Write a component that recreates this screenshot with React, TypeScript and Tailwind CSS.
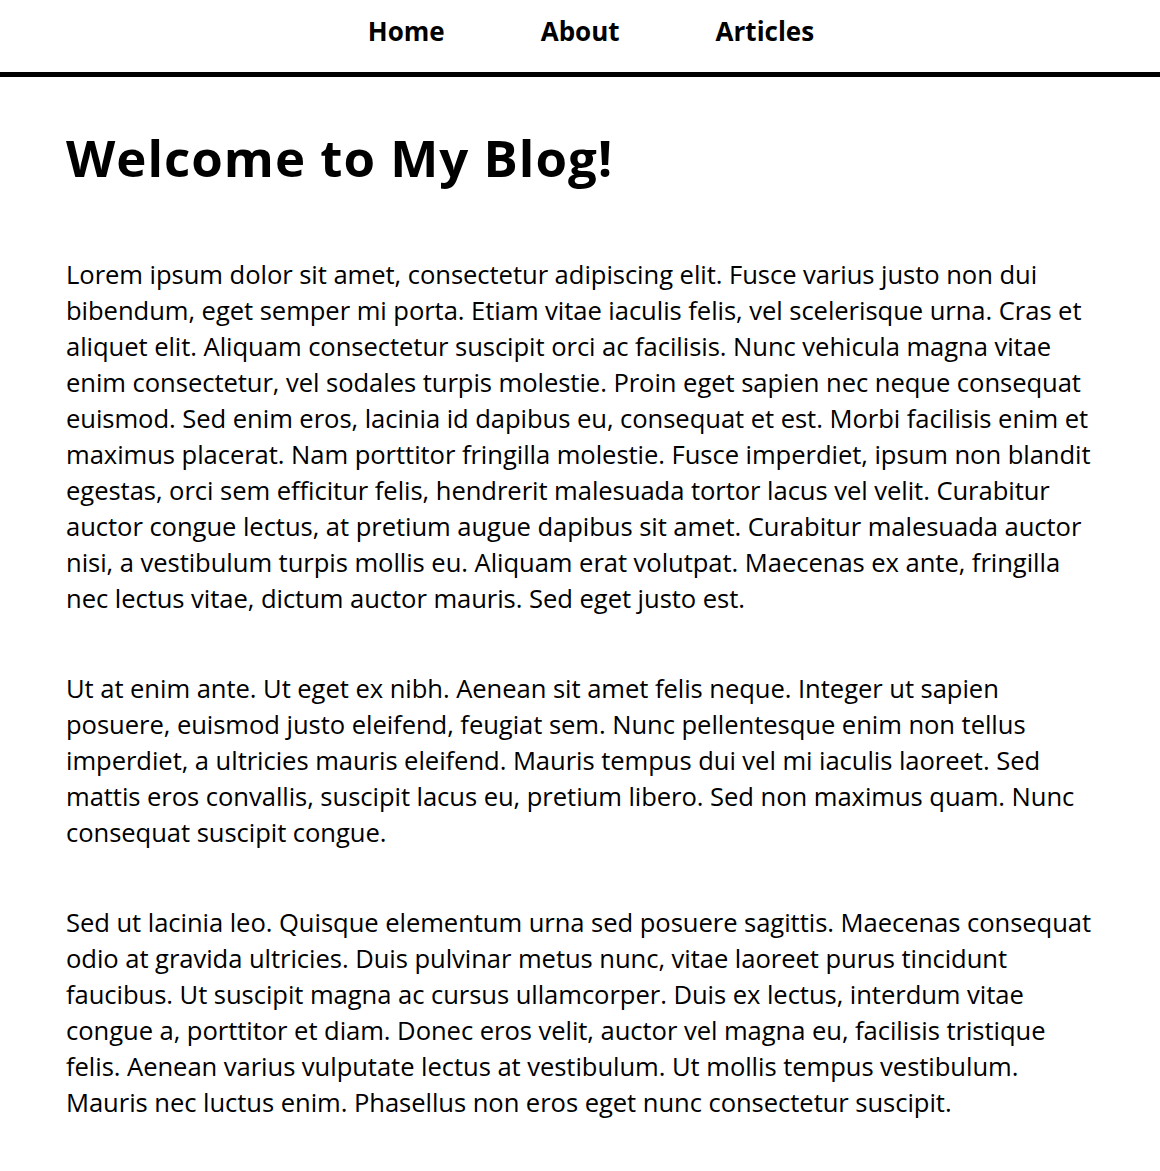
const paragraphs = [
  'Lorem ipsum dolor sit amet, consectetur adipiscing elit. Fusce varius justo non dui bibendum, eget semper mi porta. Etiam vitae iaculis felis, vel scelerisque urna. Cras et aliquet elit. Aliquam consectetur suscipit orci ac facilisis. Nunc vehicula magna vitae enim consectetur, vel sodales turpis molestie. Proin eget sapien nec neque consequat euismod. Sed enim eros, lacinia id dapibus eu, consequat et est. Morbi facilisis enim et maximus placerat. Nam porttitor fringilla molestie. Fusce imperdiet, ipsum non blandit egestas, orci sem efficitur felis, hendrerit malesuada tortor lacus vel velit. Curabitur auctor congue lectus, at pretium augue dapibus sit amet. Curabitur malesuada auctor nisi, a vestibulum turpis mollis eu. Aliquam erat volutpat. Maecenas ex ante, fringilla nec lectus vitae, dictum auctor mauris. Sed eget justo est.',
  'Ut at enim ante. Ut eget ex nibh. Aenean sit amet felis neque. Integer ut sapien posuere, euismod justo eleifend, feugiat sem. Nunc pellentesque enim non tellus imperdiet, a ultricies mauris eleifend. Mauris tempus dui vel mi iaculis laoreet. Sed mattis eros convallis, suscipit lacus eu, pretium libero. Sed non maximus quam. Nunc consequat suscipit congue.',
  'Sed ut lacinia leo. Quisque elementum urna sed posuere sagittis. Maecenas consequat odio at gravida ultricies. Duis pulvinar metus nunc, vitae laoreet purus tincidunt faucibus. Ut suscipit magna ac cursus ullamcorper. Duis ex lectus, interdum vitae congue a, porttitor et diam. Donec eros velit, auctor vel magna eu, facilisis tristique felis. Aenean varius vulputate lectus at vestibulum. Ut mollis tempus vestibulum. Mauris nec luctus enim. Phasellus non eros eget nunc consectetur suscipit.',
];

const links = ['Home', 'About', 'Articles'];

export default function App() {
  return (
    <div className="min-h-screen bg-white text-black font-['Open_Sans',sans-serif]">
      {/* Nav */}
      <nav className="border-b-[5px] border-black pt-[13px] pb-[23px] pl-[22px]">
        <ul className="flex justify-center gap-[96px]">
          {links.map((link) => (
            <li key={link}>
              <a href="#" className="text-[26px] leading-[36px] font-bold">
                {link}
              </a>
            </li>
          ))}
        </ul>
      </nav>

      <main className="px-[66px] pt-[50px] pb-[50px]">
        <h1 className="text-[51px] leading-[60px] font-bold tracking-[1px] mb-[70px]">Welcome to My Blog!</h1>
        <div className="flex flex-col gap-[54px]">
          {paragraphs.map((p, i) => (
            <p key={i} className="text-[25.6px] leading-[36px] tracking-[-0.06px]">
              {p}
            </p>
          ))}
        </div>
      </main>
    </div>
  );
}
